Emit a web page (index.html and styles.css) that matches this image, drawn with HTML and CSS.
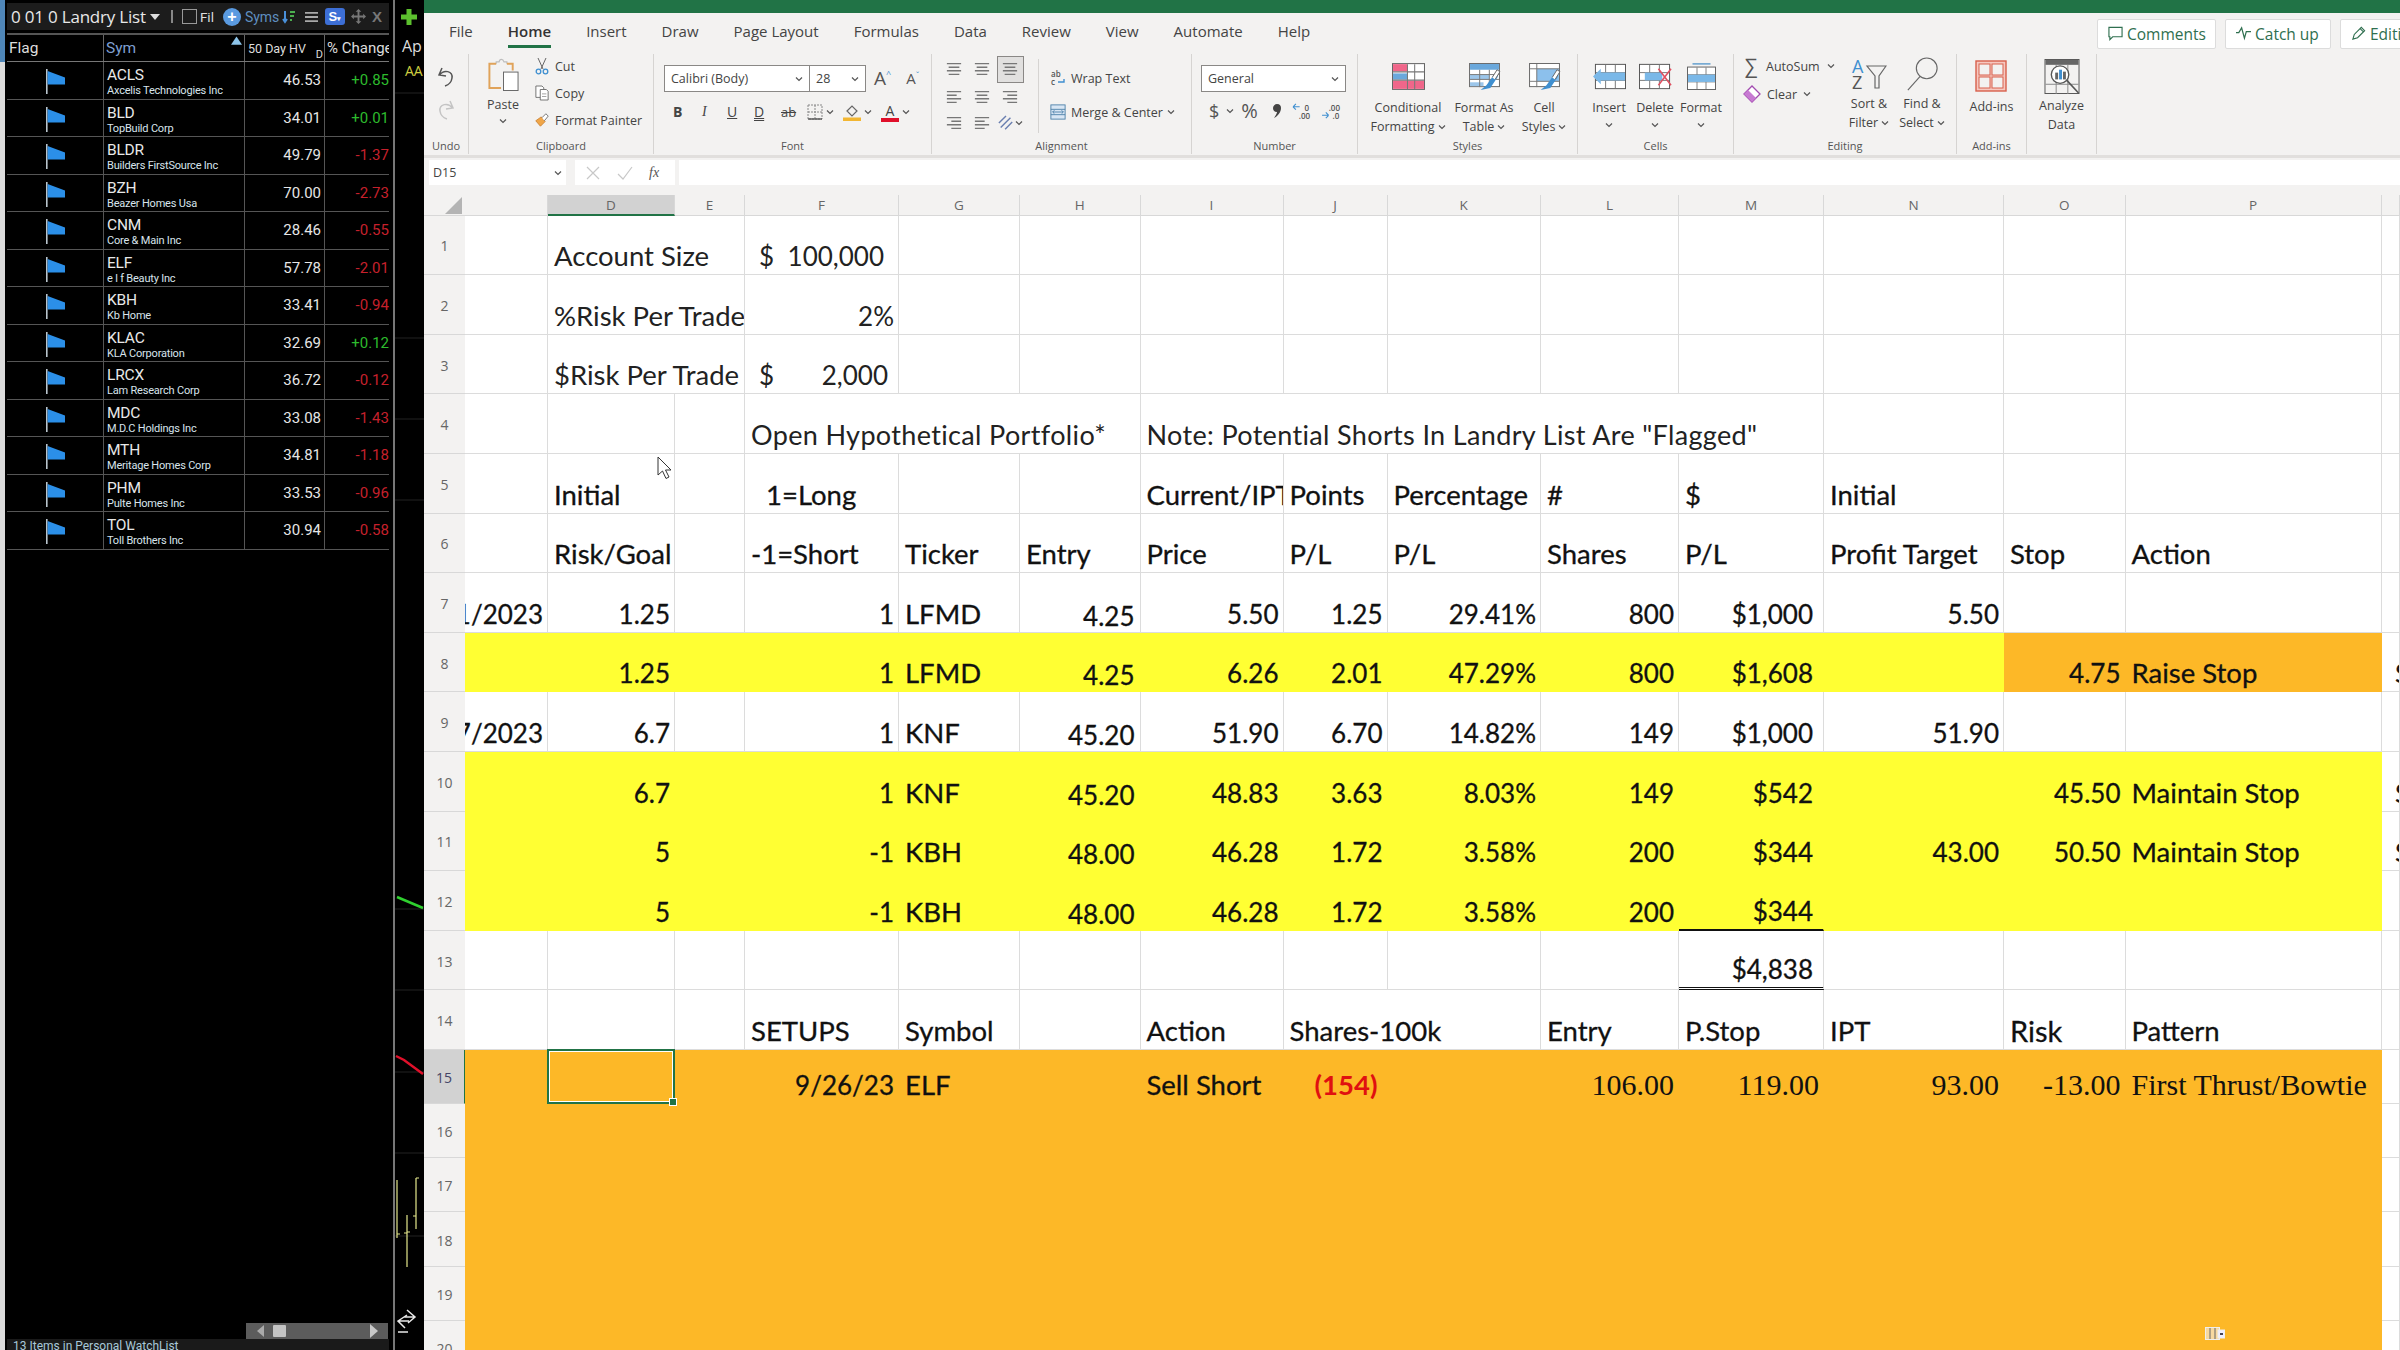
FILE: index.html
```html
<!DOCTYPE html>
<html lang="en">
<head>
<meta charset="utf-8">
<title>Landry List and Excel</title>
<link rel="stylesheet" href="styles.css">
</head>
<body>
<svg class="sprite" aria-hidden="true">
  <symbol id="flag" viewBox="0 0 22 26"><rect x="0" y="0" width="1.6" height="25" fill="#b8c4cc"/><path d="M1.6 2 L19 8.5 V15.5 H1.6Z" fill="#2b8fe8"/></symbol>
  <symbol id="chev" viewBox="0 0 8 6"><path d="M1 1.5 L4 4.5 L7 1.5" fill="none" stroke="#555" stroke-width="1.2"/></symbol>
  <symbol id="al" viewBox="0 0 18 16"><path d="M1 2H17M3 6H15M1 10H17M3 14H15" stroke="#777" stroke-width="1.5"/></symbol>
  <symbol id="all" viewBox="0 0 18 16"><path d="M1 2H17M1 6H12M1 10H17M1 14H12" stroke="#777" stroke-width="1.5"/></symbol>
  <symbol id="alr" viewBox="0 0 18 16"><path d="M1 2H17M6 6H17M1 10H17M6 14H17" stroke="#777" stroke-width="1.5"/></symbol>
</svg>

<aside class="edge"></aside>

<section class="watch">
  <header class="wbar">
    <span class="wtitle">0 01 0 Landry List</span>
    <svg class="caret" viewBox="0 0 10 6"><path d="M0 0H10L5 6Z" fill="#ddd"/></svg>
    <span class="wsep"></span>
    <span class="wcheck"></span>
    <span class="wfil">Fil</span>
    <span class="wplus">+</span>
    <span class="wsyms">Syms</span>
    <svg class="wico" viewBox="0 0 14 14"><path d="M3 1V12M1 9L3 12L5 9" fill="none" stroke="#4a90d9" stroke-width="2"/><path d="M8 2H13M8 6H12M8 10H10" stroke="#4caf50" stroke-width="2"/></svg>
    <svg class="wham" viewBox="0 0 14 12"><path d="M0 1.5H14M0 6H14M0 10.5H14" stroke="#a8a8a8" stroke-width="2"/></svg>
    <span class="wsbtn">S<small>▾</small></span>
    <svg class="wmove" viewBox="0 0 16 16"><path d="M8 0L11 3H9V7H13V5L16 8L13 11V9H9V13H11L8 16L5 13H7V9H3V11L0 8L3 5V7H7V3H5Z" fill="#777"/></svg>
    <span class="wx">X</span>
  </header>
  <div class="whead">
    <span class="wh1">Flag</span>
    <span class="wh2">Sym<svg class="tri" viewBox="0 0 12 9"><path d="M6 0L12 9H0Z" fill="#8cc4ea"/></svg></span>
    <span class="wh3">50 Day HV<em>D</em></span>
    <span class="wh4">% Change</span>
  </div>
  <div class="wrow"><span class="fl"><svg><use href="#flag"/></svg></span><span class="sy"><b>ACLS</b><small>Axcelis Technologies Inc</small></span><span class="hv">46.53</span><span class="pc up">+0.85</span></div>
  <div class="wrow"><span class="fl"><svg><use href="#flag"/></svg></span><span class="sy"><b>BLD</b><small>TopBuild Corp</small></span><span class="hv">34.01</span><span class="pc up">+0.01</span></div>
  <div class="wrow"><span class="fl"><svg><use href="#flag"/></svg></span><span class="sy"><b>BLDR</b><small>Builders FirstSource Inc</small></span><span class="hv">49.79</span><span class="pc dn">-1.37</span></div>
  <div class="wrow"><span class="fl"><svg><use href="#flag"/></svg></span><span class="sy"><b>BZH</b><small>Beazer Homes Usa</small></span><span class="hv">70.00</span><span class="pc dn">-2.73</span></div>
  <div class="wrow"><span class="fl"><svg><use href="#flag"/></svg></span><span class="sy"><b>CNM</b><small>Core &amp; Main Inc</small></span><span class="hv">28.46</span><span class="pc dn">-0.55</span></div>
  <div class="wrow"><span class="fl"><svg><use href="#flag"/></svg></span><span class="sy"><b>ELF</b><small>e l f Beauty Inc</small></span><span class="hv">57.78</span><span class="pc dn">-2.01</span></div>
  <div class="wrow"><span class="fl"><svg><use href="#flag"/></svg></span><span class="sy"><b>KBH</b><small>Kb Home</small></span><span class="hv">33.41</span><span class="pc dn">-0.94</span></div>
  <div class="wrow"><span class="fl"><svg><use href="#flag"/></svg></span><span class="sy"><b>KLAC</b><small>KLA Corporation</small></span><span class="hv">32.69</span><span class="pc up">+0.12</span></div>
  <div class="wrow"><span class="fl"><svg><use href="#flag"/></svg></span><span class="sy"><b>LRCX</b><small>Lam Research Corp</small></span><span class="hv">36.72</span><span class="pc dn">-0.12</span></div>
  <div class="wrow"><span class="fl"><svg><use href="#flag"/></svg></span><span class="sy"><b>MDC</b><small>M.D.C Holdings Inc</small></span><span class="hv">33.08</span><span class="pc dn">-1.43</span></div>
  <div class="wrow"><span class="fl"><svg><use href="#flag"/></svg></span><span class="sy"><b>MTH</b><small>Meritage Homes Corp</small></span><span class="hv">34.81</span><span class="pc dn">-1.18</span></div>
  <div class="wrow"><span class="fl"><svg><use href="#flag"/></svg></span><span class="sy"><b>PHM</b><small>Pulte Homes Inc</small></span><span class="hv">33.53</span><span class="pc dn">-0.96</span></div>
  <div class="wrow"><span class="fl"><svg><use href="#flag"/></svg></span><span class="sy"><b>TOL</b><small>Toll Brothers Inc</small></span><span class="hv">30.94</span><span class="pc dn">-0.58</span></div>
  <div class="wfill"></div>
  <div class="wscroll"><span class="sleft"></span><span class="sthumb"></span><span class="sright"></span></div>
  <footer class="wstat">13 Items in Personal WatchList</footer>
</section>

<section class="mid">
  <svg class="plus" viewBox="0 0 16 16"><path d="M5.5 0H10.5V5.5H16V10.5H10.5V16H5.5V10.5H0V5.5H5.5Z" fill="#5cc02e"/></svg>
  <div class="ap">Ap</div>
  <div class="aa">AA</div>
  <svg class="chart" viewBox="0 0 29 1350">
    <path d="M0 93H29M0 338H29M0 419H29M0 500H29M0 909H29M0 990H29M0 1072H29M0 1153H29M0 1236H29" stroke="#222"/>
    <path d="M2 897L28 908" stroke="#2fd02f" stroke-width="2.5" fill="none"/>
    <path d="M1 1056L9 1060L28 1074" stroke="#e0102a" stroke-width="2.5" fill="none"/>
    <path d="M2 1180V1238M2 1234H5M12 1215V1267M12 1232H15M9 1233H12M21 1178V1229M21 1178H24M18 1216H21" stroke="#e4e88c" stroke-width="1.2" fill="none"/>
    <path d="M12 1310L20 1317L13 1323M20 1317H9M12 1315L3 1321L10 1328M3 1321H14M3 1332H13" stroke="#e8e8e8" stroke-width="1.5" fill="none"/>
  </svg>
</section>

<main class="xl">
  <div class="green"></div>
  <nav class="tabs">
    <span class="tab t-file">File</span><span class="tab on">Home</span><span class="tab">Insert</span><span class="tab">Draw</span><span class="tab">Page Layout</span><span class="tab">Formulas</span><span class="tab">Data</span><span class="tab">Review</span><span class="tab">View</span><span class="tab">Automate</span><span class="tab">Help</span>
    <span class="tools">
      <span class="tbtn b-com"><svg viewBox="0 0 16 16"><path d="M1 1.5H15V11.5H5L2 14.5V11.5H1Z" fill="none" stroke="#2f6f4f" stroke-width="1.2"/></svg>Comments</span>
      <span class="tbtn b-cat"><svg viewBox="0 0 16 16"><path d="M0 7H3L6 2L9 13L11 6H16" fill="none" stroke="#2f6f4f" stroke-width="1.3"/></svg>Catch up</span>
      <span class="tbtn b-edit"><svg viewBox="0 0 16 16"><path d="M2 14L3.5 9L11 1.5L14.5 5L7 12.5ZM10 3L13 6" fill="none" stroke="#2f6f4f" stroke-width="1.2"/></svg>Editing</span>
    </span>
  </nav>

  <div class="ribbon">
    <div class="grp g-undo">
      <div class="body undo">
        <svg viewBox="0 0 20 22" class="i20"><path d="M6 2L3 9L10 10M3.5 9C8 3 17 5 16 12C15.5 16 12 19 9 20" fill="none" stroke="#555" stroke-width="1.5"/></svg>
        <svg viewBox="0 0 20 22" class="i20"><path d="M14 2L17 9L10 10M16.5 9C12 3 3 5 4 12C4.5 16 8 19 11 20" fill="none" stroke="#c4c4c4" stroke-width="1.5"/></svg>
      </div>
      <div class="lbl">Undo</div>
    </div>

    <div class="grp g-clip">
      <div class="body clip">
        <div class="paste">
          <svg viewBox="0 0 32 34" class="i-paste"><path d="M9 6V4H12C12.5 .5 16 .5 17 4H20V6" fill="none" stroke="#bdbdbd" stroke-width="1.2"/><path d="M14 31H2V6H9M20 6H26V13" fill="none" stroke="#e0a35a" stroke-width="2"/><rect x="16.5" y="14.5" width="15" height="19" fill="#fff" stroke="#666"/></svg>
          <span class="ptxt">Paste</span>
          <svg class="chv"><use href="#chev"/></svg>
        </div>
        <div class="clipcol">
          <span class="sm"><svg viewBox="0 0 14 18" class="i14"><path d="M3 1L8 12M11 1L6 12" stroke="#666" fill="none"/><circle cx="3.5" cy="14.5" r="2.3" fill="none" stroke="#3f8fd0" stroke-width="1.3"/><circle cx="10.5" cy="14.5" r="2.3" fill="none" stroke="#3f8fd0" stroke-width="1.3"/></svg>Cut</span>
          <span class="sm"><svg viewBox="0 0 16 18" class="i14"><path d="M1 1H8L10 3V14H1Z" fill="#fff" stroke="#666"/><path d="M6 5H13L15 7V17H6Z" fill="#fff" stroke="#666"/><path d="M8 10H13M8 13H13" stroke="#999"/></svg>Copy</span>
          <span class="sm"><svg viewBox="0 0 18 18" class="i14"><path d="M1 10L8 5L13 11L7 17Z" fill="#f0a648" stroke="#c87c2a"/><path d="M9 6L14 1L17 4L12 10" fill="#fff" stroke="#555"/></svg>Format Painter</span>
        </div>
      </div>
      <div class="lbl">Clipboard</div>
    </div>

    <div class="grp g-font">
      <div class="body fontb">
        <div class="frow1">
          <div class="combo c-name"><span class="ctxt">Calibri (Body)</span><svg class="chv"><use href="#chev"/></svg></div>
          <div class="combo c-size"><span class="ctxt">28</span><svg class="chv"><use href="#chev"/></svg></div>
          <span class="gA big">A<sup>^</sup></span>
          <span class="gA small">A<sup>ˇ</sup></span>
        </div>
        <div class="frow2">
          <span class="fb bd">B</span><span class="fb it">I</span><span class="fb un">U</span><span class="fb du">D</span><span class="fb strike">ab</span>
          <svg viewBox="0 0 16 16" class="i16"><path d="M1 1H15V15H1ZM8 1V15M1 8H15" fill="none" stroke="#888" stroke-dasharray="2 1"/><path d="M1 15H15" stroke="#555" stroke-width="1.4"/></svg><svg class="chv"><use href="#chev"/></svg>
          <svg viewBox="0 0 18 18" class="i18"><path d="M4 8L9 3L14 8L9 13Z" fill="none" stroke="#666" stroke-width="1.2"/><rect x="0" y="14.5" width="18" height="3.5" fill="#f2b632"/></svg><svg class="chv"><use href="#chev"/></svg>
          <span class="fcolor">A</span><svg class="chv"><use href="#chev"/></svg>
        </div>
      </div>
      <div class="lbl">Font</div>
    </div>

    <div class="grp g-align">
      <div class="body alignb">
        <div class="algrid">
          <span class="ac"><svg class="i16"><use href="#al"/></svg></span><span class="ac"><svg class="i16"><use href="#al"/></svg></span><span class="ac acon"><svg class="i16"><use href="#al"/></svg></span>
          <span class="ac"><svg class="i16"><use href="#all"/></svg></span><span class="ac"><svg class="i16"><use href="#al"/></svg></span><span class="ac"><svg class="i16"><use href="#alr"/></svg></span>
          <span class="ac"><svg class="i16"><use href="#alr"/></svg></span><span class="ac"><svg class="i16"><use href="#all"/></svg></span><span class="ac"><svg viewBox="0 0 18 18" class="i16"><path d="M3 14L14 3M1 9L9 1M8 16L16 8" stroke="#6a7fb0" stroke-width="1.6"/></svg><svg class="chv"><use href="#chev"/></svg></span>
        </div>
        <div class="alcol">
          <span class="sm"><svg viewBox="0 0 16 16" class="i16"><text x="1" y="7" class="abt">ab</text><text x="1" y="15" class="abt">c</text><path d="M8 12H14V9" fill="none" stroke="#3f8fd0" stroke-width="1.4"/></svg>Wrap Text</span>
          <span class="sm"><svg viewBox="0 0 18 18" class="i16"><rect x="1" y="1" width="16" height="16" fill="#d8e6f4" stroke="#4a7ea8"/><path d="M1 6H17M1 12H17M3 9H15M3 9L5 7M3 9L5 11M15 9L13 7M15 9L13 11" fill="none" stroke="#4a7ea8"/></svg>Merge &amp; Center<svg class="chv"><use href="#chev"/></svg></span>
        </div>
      </div>
      <div class="lbl">Alignment</div>
    </div>

    <div class="grp g-num">
      <div class="body numb">
        <div class="combo c-gen"><span class="ctxt">General</span><svg class="chv"><use href="#chev"/></svg></div>
        <div class="nrow">
          <span class="nb">$</span><svg class="chv"><use href="#chev"/></svg><span class="nb pct">%</span>
          <svg viewBox="0 0 10 16" class="ncomma"><path d="M5 1C8 1 9 3 9 5C9 9 6 13 2 15C4 12 5 10 5 9C2 9 1 7 1 5C1 3 3 1 5 1Z" fill="#444"/></svg>
          <svg viewBox="0 0 22 18" class="ndec"><path d="M8 4H1M1 4L4 1M1 4L4 7" fill="none" stroke="#3f8fd0" stroke-width="1.2"/><text x="13" y="8" class="ndt">0</text><text x="7" y="17" class="ndt">.00</text></svg>
          <svg viewBox="0 0 22 18" class="ndec"><text x="8" y="8" class="ndt">.00</text><path d="M1 13H8M8 13L5 10M8 13L5 16" fill="none" stroke="#3f8fd0" stroke-width="1.2"/><text x="12" y="17" class="ndt">.0</text></svg>
        </div>
      </div>
      <div class="lbl">Number</div>
    </div>

    <div class="grp g-sty">
      <div class="body bigs sty">
        <div class="bb">
          <svg viewBox="0 0 32 26" class="ib"><rect x=".5" y=".5" width="31" height="25" fill="#fff" stroke="#666"/><rect x="1" y="1" width="14" height="7" fill="#f0668a"/><rect x="1" y="10" width="14" height="6" fill="#6aa8dc"/><rect x="1" y="17" width="30" height="8" fill="#f0668a"/><path d="M15 1V25M22 1V25M1 8.500H31M1 16.500H31" stroke="#777"/></svg>
          <span>Conditional<br>Formatting<svg class="chv"><use href="#chev"/></svg></span>
        </div>
        <div class="bb">
          <svg viewBox="0 0 32 28" class="ib"><rect x=".5" y=".5" width="31" height="24" fill="#fff" stroke="#666"/><rect x="1" y="1" width="30" height="6" fill="#6aa8dc"/><rect x="1" y="12" width="20" height="5" fill="#9cc6ea"/><rect x="1" y="20" width="14" height="4" fill="#9cc6ea"/><path d="M1 12H31M1 17H31M11 7V25M21 7V25" stroke="#777"/><path d="M12 28L18 23L26 12L30 14L22 26Z" fill="#3f8fd0"/><path d="M24 15L29 7L32 9L27 17" fill="#fff" stroke="#666"/></svg>
          <span>Format As<br>Table<svg class="chv"><use href="#chev"/></svg></span>
        </div>
        <div class="bb">
          <svg viewBox="0 0 32 28" class="ib"><rect x=".5" y=".5" width="31" height="24" fill="#fff" stroke="#666"/><rect x="8" y="6" width="23" height="13" fill="#8cc0ec"/><path d="M1 6H31M8 1V25M1 19H31" stroke="#777"/><path d="M12 28L18 23L26 12L30 14L22 26Z" fill="#3f8fd0"/><path d="M24 15L29 7L32 9L27 17" fill="#fff" stroke="#666"/></svg>
          <span>Cell<br>Styles<svg class="chv"><use href="#chev"/></svg></span>
        </div>
      </div>
      <div class="lbl">Styles</div>
    </div>

    <div class="grp g-cel">
      <div class="body bigs cel">
        <div class="bb">
          <svg viewBox="0 0 34 26" class="ib"><rect x="2.500" y=".5" width="31" height="25" fill="#fff" stroke="#555"/><path d="M13 1V25M23 1V25M3 9H33M3 17H33" stroke="#777"/><path d="M0 13L8 5V9H33V17H8V21Z" fill="#7ab8e8"/></svg>
          <span class="cl">Insert</span><svg class="chv"><use href="#chev"/></svg>
        </div>
        <div class="bb">
          <svg viewBox="0 0 34 26" class="ib"><rect x=".5" y=".5" width="31" height="25" fill="#fff" stroke="#555"/><path d="M11 1V25M21 1V25M1 9H31M1 17H31" stroke="#777"/><rect x="6" y="9" width="18" height="8" fill="#7ab8e8"/><path d="M20 5L33 22M33 5L20 22" stroke="#e05060" stroke-width="1.6"/></svg>
          <span class="cl">Delete</span><svg class="chv"><use href="#chev"/></svg>
        </div>
        <div class="bb">
          <svg viewBox="0 0 34 30" class="ib"><path d="M7 1H27" stroke="#4a90c8" stroke-width="1.4"/><rect x="1.500" y="4.500" width="31" height="25" fill="#fff" stroke="#555"/><path d="M12 5V29M22 5V29M2 13H32M2 21H32" stroke="#777"/><rect x="2" y="13" width="30" height="8" fill="#7ab8e8"/></svg>
          <span class="cl">Format</span><svg class="chv"><use href="#chev"/></svg>
        </div>
      </div>
      <div class="lbl">Cells</div>
    </div>

    <div class="grp g-edit">
      <div class="body editb">
        <div class="edcol">
          <span class="sm"><span class="sigma">∑</span>AutoSum<svg class="chv"><use href="#chev"/></svg></span>
          <span class="sm"><svg viewBox="0 0 18 18" class="i18"><path d="M1 9L9 1L17 9L9 17Z" fill="#fff" stroke="#a24bb0" stroke-width="1.3"/><path d="M1 9L5 5L13 13L9 17Z" fill="#c77ad2"/></svg>Clear<svg class="chv"><use href="#chev"/></svg></span>
        </div>
        <div class="bb b-sort">
          <svg viewBox="0 0 36 32" class="ib2"><text x="1" y="15" class="az azb">A</text><text x="1" y="31" class="az">Z</text><path d="M16 8H35L28 18V30H24V18Z" fill="none" stroke="#666" stroke-width="1.2"/></svg>
          <span>Sort &amp;<br>Filter<svg class="chv"><use href="#chev"/></svg></span>
        </div>
        <div class="bb b-find">
          <svg viewBox="0 0 36 36" class="ib5"><circle cx="23" cy="12" r="11" fill="none" stroke="#666" stroke-width="1.2"/><path d="M16 20.500L3 35" stroke="#666" stroke-width="1.2"/></svg>
          <span>Find &amp;<br>Select<svg class="chv"><use href="#chev"/></svg></span>
        </div>
      </div>
      <div class="lbl">Editing</div>
    </div>

    <div class="grp g-add">
      <div class="body bigs add">
        <div class="bb">
          <svg viewBox="0 0 32 32" class="ib3"><rect x="1" y="1" width="30" height="30" fill="#f6c8c0" stroke="#d8604c" stroke-width="1.4"/><rect x="4" y="4" width="11" height="11" fill="#f3f2f1" stroke="#d8604c"/><rect x="17" y="4" width="11" height="11" fill="#f3f2f1" stroke="#d8604c"/><rect x="4" y="17" width="11" height="11" fill="#f3f2f1" stroke="#d8604c"/><rect x="17" y="17" width="11" height="11" fill="#f3f2f1" stroke="#d8604c"/></svg>
          <span>Add-ins</span>
        </div>
      </div>
      <div class="lbl">Add-ins</div>
    </div>

    <div class="grp g-ana">
      <div class="body bigs add">
        <div class="bb">
          <svg viewBox="0 0 36 36" class="ib4"><rect x=".5" y=".5" width="35" height="35" fill="#f3f2f1" stroke="#555"/><rect x="1" y="1" width="34" height="5" fill="#666"/><path d="M1 26H35M12 6V36M24 6V36" stroke="#888"/><circle cx="16" cy="16" r="9" fill="#fff" stroke="#555" stroke-width="1.4"/><rect x="11" y="14" width="3" height="7" fill="#666"/><rect x="15" y="11" width="3" height="10" fill="#3f8fd0"/><rect x="19" y="13" width="3" height="8" fill="#666"/><path d="M23 22L35 35" stroke="#555" stroke-width="1.6"/></svg>
          <span>Analyze<br>Data</span>
        </div>
      </div>
      <div class="lbl">&nbsp;</div>
    </div>
  </div>

  <div class="fbar">
    <div class="namebox"><span>D15</span><svg class="chv"><use href="#chev"/></svg></div>
    <div class="fxbox">
      <svg viewBox="0 0 16 16" class="i16"><path d="M2 2L14 14M14 2L2 14" stroke="#c8c8c8" stroke-width="1.2"/></svg>
      <svg viewBox="0 0 16 16" class="i16"><path d="M1 9L6 14L15 2" fill="none" stroke="#c8c8c8" stroke-width="1.2"/></svg>
      <span class="fx">fx</span>
    </div>
    <div class="finput"></div>
  </div>

  <div class="sheet">
    <div class="corner"><svg viewBox="0 0 17 17"><path d="M17 0V17H0Z" fill="#b4b4b4"/></svg></div>
    <div class="ch"></div><div class="ch on">D</div><div class="ch">E</div><div class="ch">F</div><div class="ch">G</div><div class="ch">H</div><div class="ch">I</div><div class="ch">J</div><div class="ch">K</div><div class="ch">L</div><div class="ch">M</div><div class="ch">N</div><div class="ch">O</div><div class="ch">P</div><div class="ch"></div>

    <div class="rh">1</div><div class="c"></div><div class="c s2">Account Size</div><div class="c acct"><span>$</span><span class="an1">100,000</span></div><div class="c"></div><div class="c"></div><div class="c"></div><div class="c"></div><div class="c"></div><div class="c"></div><div class="c"></div><div class="c"></div><div class="c"></div><div class="c"></div><div class="c"></div>

    <div class="rh">2</div><div class="c"></div><div class="c s2">%Risk Per Trade</div><div class="c r">2%</div><div class="c"></div><div class="c"></div><div class="c"></div><div class="c"></div><div class="c"></div><div class="c"></div><div class="c"></div><div class="c"></div><div class="c"></div><div class="c"></div><div class="c"></div>

    <div class="rh">3</div><div class="c"></div><div class="c s2">$Risk Per Trade</div><div class="c acct"><span>$</span><span class="an3">2,000</span></div><div class="c"></div><div class="c"></div><div class="c"></div><div class="c"></div><div class="c"></div><div class="c"></div><div class="c"></div><div class="c"></div><div class="c"></div><div class="c"></div><div class="c"></div>

    <div class="rh">4</div><div class="c"></div><div class="c"></div><div class="c"></div><div class="c s3 wide">Open Hypothetical Portfolio*</div><div class="c s5 wide">Note: Potential Shorts In Landry List Are "Flagged"</div><div class="c"></div><div class="c"></div><div class="c"></div><div class="c"></div>

    <div class="rh">5</div><div class="c"></div><div class="c b">Initial</div><div class="c"></div><div class="c b long">1=Long</div><div class="c"></div><div class="c"></div><div class="c b">Current/IPT</div><div class="c b">Points</div><div class="c b">Percentage</div><div class="c b">#</div><div class="c b">$</div><div class="c b">Initial</div><div class="c"></div><div class="c"></div><div class="c"></div>

    <div class="rh">6</div><div class="c"></div><div class="c b">Risk/Goal</div><div class="c"></div><div class="c b">-1=Short</div><div class="c b">Ticker</div><div class="c b">Entry</div><div class="c b">Price</div><div class="c b">P/L</div><div class="c b">P/L</div><div class="c b">Shares</div><div class="c b">P/L</div><div class="c b">Profit Target</div><div class="c b">Stop</div><div class="c b">Action</div><div class="c"></div>

    <div class="rh">7</div><div class="c b r">9/11/2023</div><div class="c b r">1.25</div><div class="c"></div><div class="c b r">1</div><div class="c b">LFMD</div><div class="c b r h">4.25</div><div class="c b r">5.50</div><div class="c b r">1.25</div><div class="c b r">29.41%</div><div class="c b r">800</div><div class="c b r m">$1,000</div><div class="c b r">5.50</div><div class="c"></div><div class="c"></div><div class="c"></div>

    <div class="rh">8</div><div class="c y"></div><div class="c b r y">1.25</div><div class="c y"></div><div class="c b r y">1</div><div class="c b y">LFMD</div><div class="c b r h y">4.25</div><div class="c b r y">6.26</div><div class="c b r y">2.01</div><div class="c b r y">47.29%</div><div class="c b r y">800</div><div class="c b r y m">$1,608</div><div class="c y"></div><div class="c b r o">4.75</div><div class="c b o">Raise Stop</div><div class="c b q">$</div>

    <div class="rh">9</div><div class="c b r">9/7/2023</div><div class="c b r">6.7</div><div class="c"></div><div class="c b r">1</div><div class="c b">KNF</div><div class="c b r h">45.20</div><div class="c b r">51.90</div><div class="c b r">6.70</div><div class="c b r">14.82%</div><div class="c b r">149</div><div class="c b r m">$1,000</div><div class="c b r">51.90</div><div class="c"></div><div class="c"></div><div class="c"></div>

    <div class="rh">10</div><div class="c y"></div><div class="c b r y">6.7</div><div class="c y"></div><div class="c b r y">1</div><div class="c b y">KNF</div><div class="c b r h y">45.20</div><div class="c b r y">48.83</div><div class="c b r y">3.63</div><div class="c b r y">8.03%</div><div class="c b r y">149</div><div class="c b r y m">$542</div><div class="c y"></div><div class="c b r y">45.50</div><div class="c b y">Maintain Stop</div><div class="c b q">$</div>

    <div class="rh">11</div><div class="c y"></div><div class="c b r y">5</div><div class="c y"></div><div class="c b r y">-1</div><div class="c b y">KBH</div><div class="c b r h y">48.00</div><div class="c b r y">46.28</div><div class="c b r y">1.72</div><div class="c b r y">3.58%</div><div class="c b r y">200</div><div class="c b r y m">$344</div><div class="c b r y">43.00</div><div class="c b r y">50.50</div><div class="c b y">Maintain Stop</div><div class="c b q">$</div>

    <div class="rh">12</div><div class="c y"></div><div class="c b r y">5</div><div class="c y"></div><div class="c b r y">-1</div><div class="c b y">KBH</div><div class="c b r h y">48.00</div><div class="c b r y">46.28</div><div class="c b r y">1.72</div><div class="c b r y">3.58%</div><div class="c b r y">200</div><div class="c b r y m under">$344</div><div class="c y"></div><div class="c y"></div><div class="c y"></div><div class="c"></div>

    <div class="rh">13</div><div class="c"></div><div class="c"></div><div class="c"></div><div class="c"></div><div class="c"></div><div class="c"></div><div class="c"></div><div class="c"></div><div class="c"></div><div class="c"></div><div class="c b r m dbl">$4,838</div><div class="c"></div><div class="c"></div><div class="c"></div><div class="c"></div>

    <div class="rh">14</div><div class="c"></div><div class="c"></div><div class="c"></div><div class="c b">SETUPS</div><div class="c b">Symbol</div><div class="c"></div><div class="c b">Action</div><div class="c b s2">Shares-100k</div><div class="c b">Entry</div><div class="c b">P.Stop</div><div class="c b">IPT</div><div class="c b risk">Risk</div><div class="c b">Pattern</div><div class="c"></div>

    <div class="rh on">15</div><div class="c o"></div><div class="c o sel"></div><div class="c o"></div><div class="c b r o">9/26/23</div><div class="c b o">ELF</div><div class="c o"></div><div class="c b o">Sell Short</div><div class="c o short">(154)</div><div class="c o"></div><div class="c t r o">106.00</div><div class="c t r o">119.00</div><div class="c t r o">93.00</div><div class="c t r o">-13.00</div><div class="c t o">First Thrust/Bowtie</div><div class="c"></div>

    <div class="rh">16</div><div class="c o s14"></div><div class="c"></div>
    <div class="rh">17</div><div class="c o s14"></div><div class="c"></div>
    <div class="rh">18</div><div class="c o s14"></div><div class="c"></div>
    <div class="rh">19</div><div class="c o s14"></div><div class="c"></div>
    <div class="rh">20</div><div class="c o s14"></div><div class="c"></div>

    <svg class="pastetag" viewBox="0 0 20 13"><rect x=".5" y=".5" width="14" height="12" fill="#f7d9a0" stroke="#eee"/><path d="M5 1V12M10 1V12" stroke="#666"/><rect x="13" y="3" width="6.5" height="8" fill="#eef" stroke="#eee"/><rect x="15" y="6" width="3" height="2" fill="#445"/></svg>
    <svg class="cursor" viewBox="0 0 15 24"><path d="M1 1V19L5.5 15L9 22.5L12 21L8.5 14H14Z" fill="#fff" stroke="#333"/></svg>
  </div>
</main>
</body>
</html>
```

FILE: styles.css
```css
* { box-sizing: border-box; }
html, body { margin: 0; padding: 0; height: 1350px; overflow: hidden; }
body { display: flex; width: 2400px; background: #000; font-family: "Open Sans", "Noto Sans", sans-serif; }
.sprite { display: none; }
svg { flex: none; }
.chv { width: 8px; height: 6px; flex: none; }

/* left edge */
.edge { width: 5px; flex: none; background: linear-gradient(#4f86b8 0, #4f86b8 62px, #dcdcdc 62px); }

/* watch list */
.watch { width: 388px; flex: none; height: 1350px; background: #000; padding: 3px 0 0 2px; display: flex; flex-direction: column; color: #e6e6e6; font-family: Roboto, "Open Sans", sans-serif; border-right: 2px solid #000; }
.wbar { height: 27px; width: 382px; background: #1c1c1c; display: flex; align-items: center; padding-left: 4px; flex: none; }
.wtitle { font: 400 17px "Open Sans", sans-serif; color: #e8e8e8; white-space: nowrap; letter-spacing: -.2px; }
.caret { width: 10px; height: 6px; margin-left: 4px; }
.wsep { width: 2px; height: 13px; background: #888; margin-left: 11px; }
.wcheck { width: 15px; height: 15px; border: 1px solid #999; margin-left: 9px; }
.wfil { font-size: 13.5px; margin-left: 3px; width: 17px; color: #ddd; }
.wplus { width: 18px; height: 18px; border-radius: 50%; background: #5a9ae0; color: #fff; font: 700 16px/18px "Liberation Sans", sans-serif; text-align: center; margin-left: 6px; }
.wsyms { font-size: 14px; color: #5f8fc0; margin-left: 4px; width: 33px; }
.wico { width: 14px; height: 14px; margin-left: 4px; }
.wham { width: 13px; height: 12px; margin-left: 9px; }
.wsbtn { width: 20px; height: 17px; background: #3d6fd6; border-radius: 3px; margin-left: 7px; color: #fff; font: 700 13px/17px "Liberation Sans", sans-serif; text-align: center; }
.wsbtn small { font-size: 7px; }
.wmove { width: 15px; height: 15px; margin-left: 6px; }
.wx { font: 700 15px "Liberation Sans", sans-serif; color: #777; margin-left: 6px; }

.whead { margin-top: 3px; height: 29px; width: 382px; flex: none; border-top: 2px solid #555; border-bottom: 1px solid #777; display: grid; grid-template-columns: 97px 141px 80px 64px; font-size: 15px; overflow: hidden; }
.whead span { white-space: nowrap; overflow: hidden; display: flex; align-items: center; position: relative; border-right: 1px solid #666; }
.wh1 { padding-left: 2px; color: #ddd; font-size: 15.5px; }
.wh2 { padding-left: 2px; color: #7f9fd0; font-size: 15.5px; }
.tri { position: absolute; right: 2px; top: 1px; width: 11px; height: 9px; }
.whead .wh3 { padding-left: 3px; font-size: 12.5px; color: #ddd; }
.wh3 em { position: absolute; right: 1px; bottom: 0; font-style: normal; font-size: 11px; }
.whead .wh4 { padding-left: 2px; border-right: 0; font-size: 15px; color: #ddd; }

.wrow { height: 37.5px; width: 382px; flex: none; display: grid; grid-template-columns: 97px 141px 80px 64px; border-bottom: 1px solid #555; }
.wrow > span { border-right: 1px solid #555; display: flex; }
.wrow > span:last-child { border-right: 0; }
.fl { padding: 7px 0 0 39px; }
.fl svg { width: 22px; height: 26px; }
.sy { flex-direction: column; padding: 4px 0 0 3px; line-height: 1; }
.sy b { font-weight: 400; font-size: 15.5px; line-height: 18px; color: #e8e8e8; letter-spacing: -.2px; }
.sy small { font-size: 11px; line-height: 14px; color: #d8e4ec; letter-spacing: -.2px; white-space: nowrap; }
.hv, .pc { align-items: center; justify-content: flex-end; font-size: 15px; }
.hv { padding-right: 3px; color: #e6e6e6; }
.up { color: #2dbb2d; }
.dn { color: #c6202c; }
.wfill { flex: 1; }
.wscroll { height: 16px; width: 142px; margin-left: 239px; background: #5c5c5c; flex: none; display: flex; align-items: center; }
.sleft { width: 0; height: 0; border: 6px solid transparent; border-left: 0; border-right: 7px solid #aaa; margin-left: 11px; }
.sthumb { width: 13px; height: 12px; background: #c4c4c4; margin-left: 9px; border-radius: 1px; }
.sright { width: 0; height: 0; border: 7px solid transparent; border-right: 0; border-left: 8px solid #c8c8c8; margin-left: 84px; }
.wstat { height: 11px; flex: none; width: 382px; background: #1a1a1a; color: #a8c8d8; font-size: 12px; line-height: 14px; padding-left: 6px; overflow: hidden; white-space: nowrap; }

/* middle strip */
.mid { width: 31px; flex: none; height: 1350px; border-left: 2px solid #777; background: #000; position: relative; padding-top: 9px; overflow: hidden; }
.plus { width: 16px; height: 16px; display: block; margin-left: 6px; }
.ap { color: #dcdcdc; font-size: 16px; line-height: 22px; margin: 10px 0 0 7px; }
.aa { color: #cfcf40; font-size: 14px; line-height: 18px; margin: 5px 0 0 10px; }
.chart { position: absolute; left: 0; top: 0; width: 29px; height: 1350px; }

/* excel */
.xl { flex: 1; min-width: 0; height: 1350px; background: #f3f2f1; display: flex; flex-direction: column; overflow: hidden; color: #444; }
.green { height: 12.5px; background: #217346; flex: none; }
.tabs { height: 39.5px; flex: none; display: flex; align-items: flex-start; padding: 8px 0 0 25px; gap: 35px; font-size: 15px; color: #444; }
.tab { height: 27px; line-height: 20px; border-bottom: 3px solid transparent; white-space: nowrap; }
.tab.on { font-weight: 600; border-bottom-color: #217346; color: #333; }
.tools { margin-left: auto; display: flex; gap: 9px; margin-top: -2px; margin-right: -40px; }
.tbtn { height: 30px; background: #fff; border: 1px solid #dcdcdc; display: flex; align-items: center; gap: 4px; padding: 0 10px; color: #2f6f4f; font-size: 15.5px; white-space: nowrap; border-radius: 2px; }
.tbtn svg { width: 15px; height: 15px; }
.b-com { width: 119px; }
.b-cat { width: 106px; }
.b-edit { width: 100px; }

.ribbon { height: 106px; flex: none; display: flex; align-items: stretch; padding-top: 2px; border-bottom: 3px solid #e1dfdd; }
.grp { display: flex; flex-direction: column; border-right: 1px solid #d6d4d2; flex: none; height: 100px; }
.body { flex: 1; display: flex; min-height: 0; }
.lbl { height: 17px; font-size: 11px; line-height: 17px; text-align: center; color: #555; white-space: nowrap; }
.g-undo { width: 45px; }
.g-clip { width: 185px; }
.g-font { width: 278px; }
.g-align { width: 260px; }
.g-num { width: 166px; }
.g-sty { width: 220px; }
.g-cel { width: 156px; }
.g-edit { width: 223px; }
.g-add { width: 70px; }
.g-ana { width: 70px; }
.sm { display: flex; align-items: center; gap: 6px; font-size: 12.5px; white-space: nowrap; }
.i20 { width: 20px; height: 22px; }
.i14 { width: 14px; height: 18px; flex: none; }
.i16 { width: 16px; height: 16px; flex: none; }
.i18 { width: 18px; height: 18px; flex: none; }

.undo { flex-direction: column; align-items: center; padding-top: 12px; gap: 11px; }
.clip { padding: 2px 0 0 14px; gap: 12px; }
.paste { width: 40px; display: flex; flex-direction: column; align-items: center; font-size: 12.5px; }
.i-paste { width: 32px; height: 33px; margin-top: 2px; }
.ptxt { margin-top: 6px; line-height: 16px; }
.paste .chv { margin-top: 5px; }
.clipcol { display: flex; flex-direction: column; padding-top: 0; gap: 7px; }
.clipcol .sm { height: 20px; }

.fontb { flex-direction: column; padding: 11px 0 0 10px; }
.frow1 { display: flex; align-items: center; }
.combo { height: 27px; background: #fff; border: 1px solid #8a8886; display: flex; align-items: center; justify-content: space-between; padding: 0 6px; font-size: 12.5px; }
.c-name { width: 145px; border-right: 0; }
.c-size { width: 57px; }
.gA { color: #555; display: block; line-height: 1; }
.gA sup { font-size: 9px; color: #3f8fd0; vertical-align: top; }
.gA.big { font-size: 19px; margin-left: 8px; }
.gA.small { font-size: 15px; margin-left: 15px; }
.frow2 { display: flex; align-items: center; margin-top: 8px; padding-left: 9px; height: 24px; }
.fb { width: 27px; font-size: 14px; line-height: 20px; color: #444; }
.bd { font-weight: 700; }
.it { font-style: italic; font-family: "Liberation Serif", serif; padding-left: 2px; }
.un { text-decoration: underline; }
.du { text-decoration: underline double; }
.strike { text-decoration: line-through; font-size: 13px; width: 26px; }
.frow2 .chv { margin: 0 9px 0 3px; }
.fcolor { width: 18px; text-align: center; border-bottom: 4px solid #e0102a; font-size: 14px; line-height: 17px; height: 20px; }

.alignb { padding: 1px 0 0 8px; }
.algrid { width: 98px; display: grid; grid-template-columns: repeat(3, 28px); grid-template-rows: 28px 27px 26px; align-items: center; justify-items: center; }
.ac { width: 27px; height: 27px; display: flex; align-items: center; justify-content: center; flex: none; }
.ac .chv { margin-left: 1px; }
.acon { background: #e1e0df; border: 1px solid #8a8886; }
.alcol { border-left: 1px solid #d6d4d2; height: 74px; margin: 4px 0 0 0; padding: 10px 0 0 11px; display: flex; flex-direction: column; gap: 16px; }
.alcol .sm { height: 18px; gap: 5px; }
.alcol .chv { margin-left: -1px; }
.abt { font-size: 8px; fill: #555; font-weight: 600; }

.numb { flex-direction: column; padding: 11px 0 0 9px; }
.c-gen { width: 145px; }
.nrow { display: flex; align-items: center; height: 26px; margin-top: 6px; padding-left: 8px; color: #555; }
.nb { font-size: 18px; line-height: 24px; }
.nrow .chv { margin: 0 7px 0 7px; }
.pct { font-size: 20px; width: 31px; }
.ncomma { width: 10px; height: 16px; margin-right: 10px; }
.ndec { width: 21px; height: 17px; margin-right: 8px; }
.ndt { font-size: 8.5px; font-weight: 600; fill: #555; }

.bigs { padding-top: 9px; }
.bb { display: flex; flex-direction: column; align-items: center; font-size: 12.5px; line-height: 19px; text-align: center; white-space: nowrap; }
.bb .chv { margin-left: 3px; vertical-align: 1px; }
.ib { width: 33px; height: 27px; margin-bottom: 7.5px; }
.sty { padding-left: 9px; }
.sty .bb:nth-child(1) { width: 82px; }
.sty .bb:nth-child(2) { width: 70px; }
.sty .bb:nth-child(3) { width: 50px; }
.cel { padding-left: 8px; }
.cel .bb { width: 46px; }
.cel .chv { margin: 5px 0 0; }
.cel .cl { line-height: 19px; }
.editb { padding: 0 0 0 9px; }
.edcol { width: 96px; display: flex; flex-direction: column; gap: 8px; padding-top: 2px; }
.edcol .sm { height: 20px; gap: 6px; }
.edcol .sm:first-child { gap: 7px; }
.sigma { font-size: 20px; width: 16px; text-align: center; color: #555; line-height: 20px; }
.b-sort { width: 54px; padding-top: 4px; margin-left: 3px; }
.b-find { width: 52px; padding-top: 3px; }
.ib2 { width: 36px; height: 32px; margin-bottom: 4px; }
.ib5 { width: 36px; height: 34px; margin-bottom: 3px; }
.az { font-size: 18px; fill: #555; }
.azb { fill: #3f8fd0; }
.add { justify-content: center; padding-top: 6px; }
.ib3 { width: 32px; height: 32px; margin-bottom: 4.500px; }
.ib4 { width: 36px; height: 35px; margin-bottom: 2px; margin-top: -1px; }

/* formula bar */
.fbar { height: 30px; flex: none; display: flex; padding: 2px 0 3px 5px; gap: 4px; }
.namebox { width: 137px; background: #fff; display: flex; align-items: center; justify-content: space-between; padding: 0 4px; font-size: 12.5px; margin-right: 5px; }
.fxbox { width: 100px; background: #fff; display: flex; align-items: center; padding-left: 10px; gap: 16px; }
.fx { font: italic 14px "Liberation Serif", serif; color: #555; }
.finput { flex: 1; background: #fff; }

/* sheet */
.sheet { margin-top: 7px; flex: none; height: 1160px; display: grid; position: relative; background: #fff; grid-template-columns: 41px 83px 127px 70px 154px 121px 120.5px 143px 104px 153.5px 138px 145px 180px 121.5px 256px 18px; grid-template-rows: 20.6px repeat(14, 59.6px) repeat(6, 54.2px); font-family: Lato, "Open Sans", sans-serif; font-size: 27.5px; color: #222; }
.corner, .ch { background: #f3f2f1; border-bottom: 1px solid #d8d8d8; }
.corner { padding: 2px 0 0 21px; }
.corner svg { width: 17px; height: 17px; display: block; }
.ch { border-right: 1px solid #d8d8d8; text-align: center; font: 13.5px/21px "Open Sans", sans-serif; color: #666; }
.ch.on { background: #d2d2d2; border-bottom: 2px solid #217346; }
.rh { background: #f3f2f1; border-bottom: 1px solid #d8d8d8; display: flex; align-items: center; justify-content: center; padding-top: 2px; font: 14px "Open Sans", sans-serif; color: #666; }
.rh.on { background: #d2d2d2; border-right: 1px solid #217346; color: #446; }
.c { display: flex; align-items: flex-end; padding: 0 4px 3px 6px; line-height: 30px; white-space: nowrap; overflow: hidden; border-right: 1px solid #dcdcdc; border-bottom: 1px solid #dcdcdc; min-width: 0; }
.r { justify-content: flex-end; font-size: 26px; }
.s2 { grid-column: span 2; }
.s3 { grid-column: span 3; }
.s5 { grid-column: span 5; }
.s14 { grid-column: span 14; }
.b { -webkit-text-stroke: .3px #111; color: #111; }
.y { background: #ffff33; border-color: #ffff33; }
.o { background: #fdb827; border-color: #fdb827; }
.acct { justify-content: space-between; padding-left: 14px; font-size: 26px; }
.an1 { padding-right: 10px; }
.an3 { padding-right: 6px; }
.wide { letter-spacing: .35px; font-size: 27px; }
.long { padding-left: 21px; }
.h { padding-bottom: 1px; padding-right: 5px; }
.m { padding-right: 10px; }
.q { padding-left: 13px; }
.under { border-bottom: 2px solid #111; }
.dbl { border-bottom: 3px double #111; }
.risk { font-size: 29px; }
.t { font-family: "Liberation Serif", serif; font-size: 30px; padding-bottom: 3px; color: #111; }
.short { color: #e01010; font-weight: 700; justify-content: center; padding-right: 14px; padding-left: 36px; }
.sel { position: relative; border: 2px solid #217346; box-shadow: inset 0 0 0 1px #fff; overflow: visible; margin: -1px 0 0 -1px; }
.sel::after { content: ""; position: absolute; right: -4px; bottom: -4px; width: 6px; height: 6px; background: #217346; border: 1px solid #fff; }
.pastetag { position: absolute; left: 1781px; top: 1132px; width: 20px; height: 13px; }
.cursor { position: absolute; left: 233px; top: 261px; width: 15px; height: 24px; }
```
